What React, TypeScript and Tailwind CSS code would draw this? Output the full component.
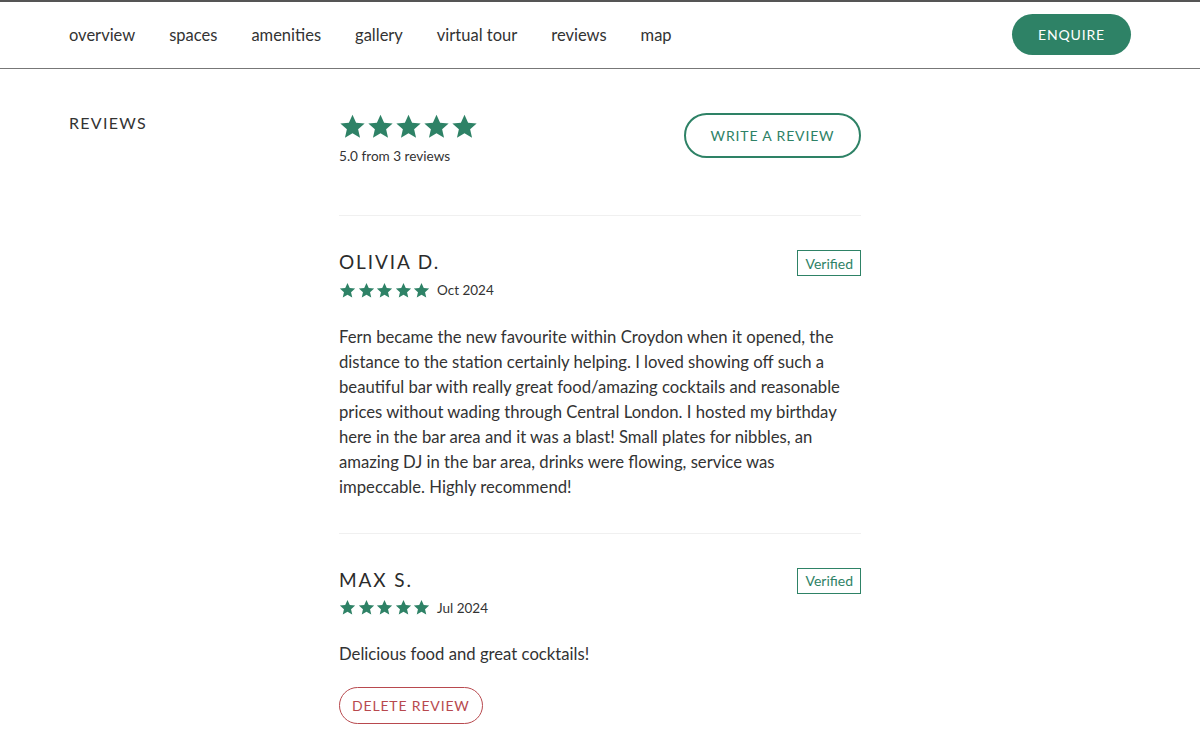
import React from 'react';

const GREEN = '#2e8266';

function Star({ size }: { size: number }) {
  return (
    <svg width={size} height={size} viewBox="0 0 24 24" fill={GREEN}>
      <path d="M12 1.5l3.2 7.1 7.6.7-5.8 5.1 1.7 7.6L12 18l-6.7 4 1.7-7.6L1.2 9.3l7.6-.7z" />
    </svg>
  );
}

function Stars({ size, gap }: { size: number; gap: string }) {
  return (
    <div className={`flex ${gap}`}>
      {[0, 1, 2, 3, 4].map((i) => (
        <Star key={i} size={size} />
      ))}
    </div>
  );
}

const navItems = ['overview', 'spaces', 'amenities', 'gallery', 'virtual tour', 'reviews', 'map'];

function Review({ name, date, text, own }: { name: string; date: string; text: string; own?: boolean }) {
  return (
    <div className="pt-[33px]">
      <div className="flex items-start justify-between">
        <div>
          <div className="text-[19px] leading-[26px] tracking-[0.1em] text-[#2b2b2b]">{name}</div>
          <div className="mt-[5px] flex items-center gap-[7px]">
            <Stars size={17} gap="gap-[1.5px]" />
            <span className="text-[13.5px] text-[#333]">{date}</span>
          </div>
        </div>
        <div className="mt-[1px] border border-[#2e8266] px-[7px] h-[26px] flex items-center text-[14px] text-[#2e8266]">
          Verified
        </div>
      </div>
      <p className="mt-[24px] text-[16.7px] leading-[25px] text-[#333]">{text}</p>
      {own ? (
        <button className="mt-[20px] h-[37px] px-[12px] rounded-full border border-[#b8494e] text-[#b8494e] text-[14px] tracking-[0.06em]">
          DELETE REVIEW
        </button>
      ) : null}
    </div>
  );
}

export default function App() {
  return (
    <div className="min-h-screen bg-white font-['Lato',sans-serif] text-[#333]">
      <header className="border-t-2 border-[#555] border-b border-b-[#777] h-[69px] flex items-center justify-between px-[69px]">
        <nav className="flex gap-[34px] text-[16.5px] text-[#333]">
          {navItems.map((n) => (
            <a key={n} href="#" className="">
              {n}
            </a>
          ))}
        </nav>
        <button className="-mt-[1px] h-[41px] w-[119px] rounded-full bg-[#2e8266] text-white text-[14px] tracking-[0.06em]">
          ENQUIRE
        </button>
      </header>

      <main className="flex px-[69px] pt-[44px]">
        <div className="w-[270px] -mt-[2px] text-[16px] tracking-[0.08em] text-[#333]">REVIEWS</div>
        <div className="w-[522px]">
          <div className="flex justify-between items-start pb-[49px] border-b border-[#f0f0f0]">
            <div>
              <Stars size={27} gap="gap-[1px]" />
              <div className="mt-[6px] text-[13.6px] text-[#333]">5.0 from 3 reviews</div>
            </div>
            <button className="h-[45px] w-[177px] rounded-full border-2 border-[#2e8266] text-[#2e8266] text-[14px] tracking-[0.06em]">
              WRITE A REVIEW
            </button>
          </div>
          <div className="pb-[33px] border-b border-[#f0f0f0]">
            <Review
              name="OLIVIA D."
              date="Oct 2024"
              text="Fern became the new favourite within Croydon when it opened, the distance to the station certainly helping. I loved showing off such a beautiful bar with really great food/amazing cocktails and reasonable prices without wading through Central London. I hosted my birthday here in the bar area and it was a blast! Small plates for nibbles, an amazing DJ in the bar area, drinks were flowing, service was impeccable. Highly recommend!"
            />
          </div>
          <Review name="MAX S." date="Jul 2024" text="Delicious food and great cocktails!" own />
        </div>
      </main>
    </div>
  );
}
